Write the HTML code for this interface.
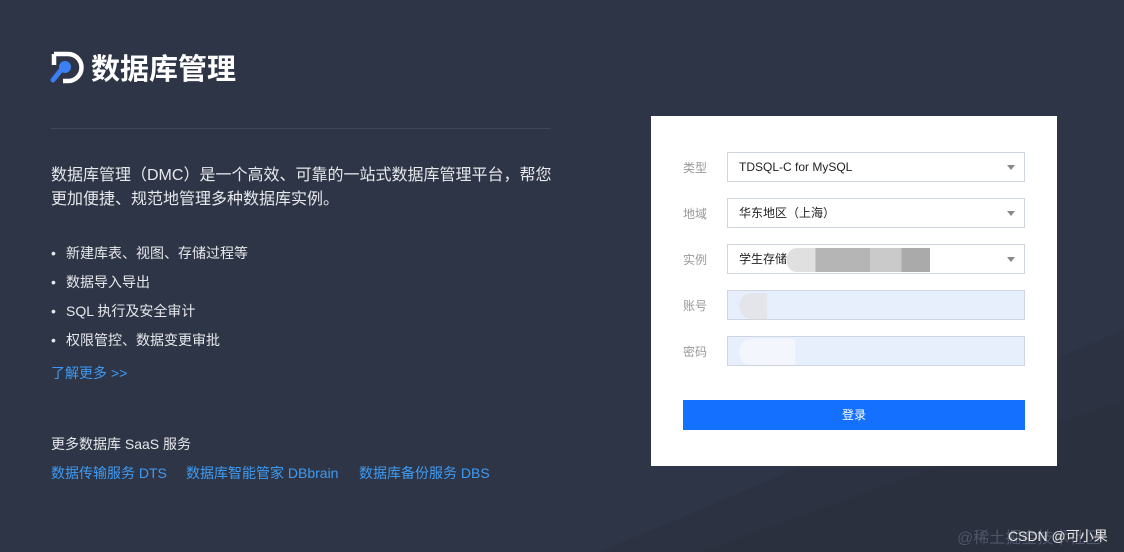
<!DOCTYPE html>
<html><head><meta charset="utf-8"><style>
*{margin:0;padding:0;box-sizing:border-box}
body{width:1124px;height:552px;overflow:hidden;background:#2e3546;font-family:"Liberation Sans","Noto Sans CJK SC",sans-serif;position:relative}
.abs{position:absolute}
.t{color:#e6e8ec;white-space:nowrap}
.link{color:#3d9bf5}
.lbl{position:absolute;left:683px;font-size:12px;color:#999}
.in{position:absolute;left:727px;width:298px;height:30px;border:1px solid #cfd5de;background:#fff;font-size:12px;color:#222;padding-left:11px;line-height:28px}
.in.f{background:#e8effc}
.arr{position:absolute;right:9px;top:12px;width:0;height:0;border-left:4px solid transparent;border-right:4px solid transparent;border-top:5px solid #888}
.b{position:absolute;left:51px;font-size:14px;color:#e6e8ec;white-space:nowrap}
.b span{position:absolute;left:15px}
</style></head><body>
<svg class="abs" style="left:0;top:0" width="1124" height="552"><polygon points="700,552 1124,400 1124,552" fill="#2a303d"/><polygon points="600,552 1124,330 1124,400 700,552" fill="#2c3241"/></svg>
<svg class="abs" style="left:50px;top:51px" width="36" height="36" viewBox="0 0 36 36">
<path d="M4 3 H18 A13 13 0 0 1 18 30 H13" fill="none" stroke="#fff" stroke-width="4.5"/>
<path d="M4 3 V14" stroke="#fff" stroke-width="4.5"/>
<circle cx="15" cy="16" r="6" fill="#3b7ff5"/><path d="M11 19 L3 29" stroke="#3b7ff5" stroke-width="5" stroke-linecap="round"/></svg>
<div class="abs t" style="left:91px;top:52px;font-size:29px;font-weight:bold;color:#fff;line-height:36px">数据库管理</div>
<div class="abs" style="left:51px;top:128px;width:499px;height:1px;background:#414858"></div>
<div class="abs t" style="left:51px;top:164px;font-size:16px;line-height:24px">数据库管理（DMC）是一个高效、可靠的一站式数据库管理平台，帮您<br>更加便捷、规范地管理多种数据库实例。</div>
<div class="b" style="top:243px"><span style="left:0;top:2px">•</span><span>新建库表、视图、存储过程等</span></div>
<div class="b" style="top:272px"><span style="left:0;top:2px">•</span><span>数据导入导出</span></div>
<div class="b" style="top:301px"><span style="left:0;top:2px">•</span><span>SQL 执行及安全审计</span></div>
<div class="b" style="top:330px"><span style="left:0;top:2px">•</span><span>权限管控、数据变更审批</span></div>
<div class="abs t link" style="left:51px;top:363px;font-size:14px">了解更多 &gt;&gt;</div>
<div class="abs t" style="left:51px;top:434px;font-size:14px">更多数据库 SaaS 服务</div>
<div class="abs t link" style="left:51px;top:463px;font-size:14px">数据传输服务 DTS</div>
<div class="abs t link" style="left:186px;top:463px;font-size:14px">数据库智能管家 DBbrain</div>
<div class="abs t link" style="left:359px;top:463px;font-size:14px">数据库备份服务 DBS</div>
<div class="abs" style="left:651px;top:116px;width:406px;height:350px;background:#fff"></div>
<div class="lbl" style="top:159px">类型</div><div class="in" style="top:152px">TDSQL-C for MySQL<div class="arr"></div></div>
<div class="lbl" style="top:205px">地域</div><div class="in" style="top:198px">华东地区（上海）<div class="arr"></div></div>
<div class="lbl" style="top:251px">实例</div><div class="in" style="top:244px">学生存储<span style="display:inline-block;vertical-align:middle;width:143px;height:24px;margin-left:0;background:linear-gradient(90deg,#e0e0e0 0,#e0e0e0 20%,#b5b5b5 20%,#b5b5b5 58%,#cacaca 58%,#cacaca 80%,#aaa 80%);border-radius:10px 0 0 10px"></span><div class="arr"></div></div>
<div class="lbl" style="top:297px">账号</div><div class="in f" style="top:290px"><span style="display:inline-block;width:28px;height:26px;background:#e3e5ea;border-radius:14px 0 0 14px;vertical-align:middle"></span></div>
<div class="lbl" style="top:343px">密码</div><div class="in f" style="top:336px"><span style="display:inline-block;width:56px;height:26px;background:#f3f6fd;border-radius:14px 0 0 14px;vertical-align:middle"></span></div>
<div class="abs" style="left:683px;top:400px;width:342px;height:30px;background:#1470ff;color:#fff;font-size:12px;text-align:center;line-height:30px">登录</div>
<div class="abs t" style="left:957px;top:524px;font-size:16px;color:#50566a">@稀土掘金技术社区</div>
<div class="abs t" style="left:1008px;top:526px;font-size:14px;color:#e8e8e8">CSDN @可小果</div>
</body></html>
